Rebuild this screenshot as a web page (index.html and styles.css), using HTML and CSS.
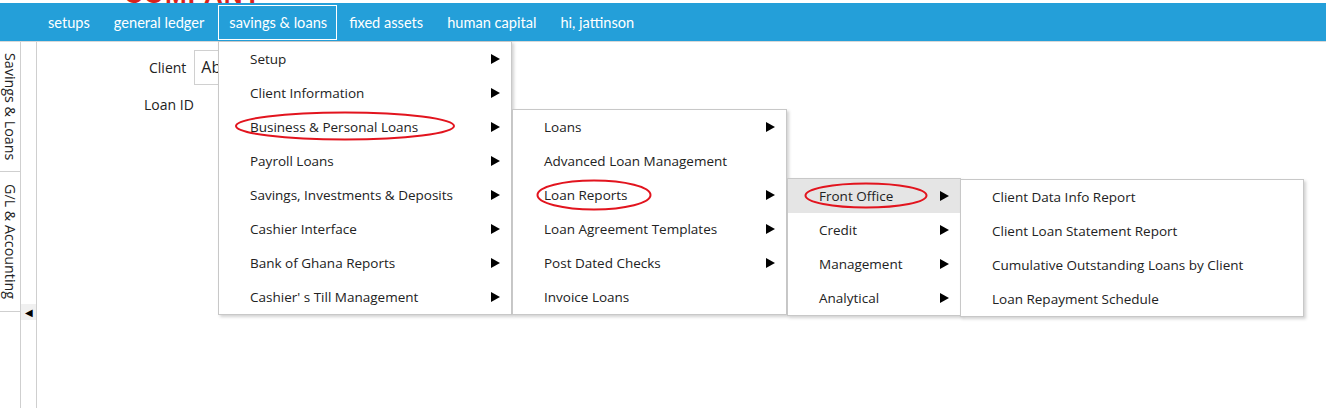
FILE: index.html
```html
<!DOCTYPE html>
<html>
<head>
<meta charset="utf-8">
<link rel="stylesheet" href="styles.css">
</head>
<body>
<div class="topstrip"><span class="brand">COMPANY</span></div>
<nav class="nav">
  <a class="nav-item">setups</a>
  <a class="nav-item">general ledger</a>
  <a class="nav-item active">savings &amp; loans</a>
  <a class="nav-item">fixed assets</a>
  <a class="nav-item">human capital</a>
  <a class="nav-item">hi, jattinson</a>
</nav>
<div class="main">
  <aside class="sidebar">
    <div class="tabs">
      <div class="tab tab-sl">Savings &amp; Loans</div>
      <div class="tab tab-gl">G/L &amp; Accounting</div>
    </div>
    <div class="collapse"><span class="collapse-btn">&#9664;</span></div>
  </aside>
  <section class="content">
    <div class="form-row row-client">
      <label class="lbl lbl-client">Client</label>
      <div class="input">Ab</div>
    </div>
    <div class="form-row row-loan">
      <label class="lbl lbl-loan">Loan ID</label>
    </div>
  </section>
</div>

<div class="menu menu1">
  <div class="mi"><span>Setup</span><i class="arr"></i></div>
  <div class="mi"><span>Client Information</span><i class="arr"></i></div>
  <div class="mi"><span>Business &amp; Personal Loans</span><i class="arr"></i></div>
  <div class="mi"><span>Payroll Loans</span><i class="arr"></i></div>
  <div class="mi"><span>Savings, Investments &amp; Deposits</span><i class="arr"></i></div>
  <div class="mi"><span>Cashier Interface</span><i class="arr"></i></div>
  <div class="mi"><span>Bank of Ghana Reports</span><i class="arr"></i></div>
  <div class="mi"><span>Cashier' s Till Management</span><i class="arr"></i></div>
</div>
<div class="menu menu2">
  <div class="mi"><span>Loans</span><i class="arr"></i></div>
  <div class="mi"><span>Advanced Loan Management</span></div>
  <div class="mi"><span>Loan Reports</span><i class="arr"></i></div>
  <div class="mi"><span>Loan Agreement Templates</span><i class="arr"></i></div>
  <div class="mi"><span>Post Dated Checks</span><i class="arr"></i></div>
  <div class="mi"><span>Invoice Loans</span></div>
</div>
<div class="menu menu3">
  <div class="mi hover"><span>Front Office</span><i class="arr"></i></div>
  <div class="mi"><span>Credit</span><i class="arr"></i></div>
  <div class="mi"><span>Management</span><i class="arr"></i></div>
  <div class="mi"><span>Analytical</span><i class="arr"></i></div>
</div>
<div class="menu menu4">
  <div class="mi"><span>Client Data Info Report</span></div>
  <div class="mi"><span>Client Loan Statement Report</span></div>
  <div class="mi"><span>Cumulative Outstanding Loans by Client</span></div>
  <div class="mi"><span>Loan Repayment Schedule</span></div>
</div>

<svg class="marks" width="1326" height="408" viewBox="0 0 1326 408">
  <ellipse cx="345" cy="126" rx="109" ry="13.5" />
  <ellipse cx="594" cy="195" rx="56.5" ry="14.5" />
  <ellipse cx="866" cy="195.5" rx="60.5" ry="12" />
</svg>
</body>
</html>
```

FILE: styles.css
```css
* { box-sizing: border-box; }
html, body { margin: 0; padding: 0; }
body {
  width: 1326px;
  height: 408px;
  overflow: hidden;
  background: #fff;
  font-family: "Open Sans", "Noto Sans", sans-serif;
  color: #222;
  position: relative;
}

.topstrip {
  height: 3px;
  overflow: hidden;
  padding-left: 124px;
}
.brand {
  display: block;
  font-family: "Liberation Sans", Arial, sans-serif;
  font-weight: bold;
  font-size: 26px;
  line-height: 26px;
  letter-spacing: 1px;
  color: #d9231d;
  margin-top: -19px;
}

.nav {
  height: 39px;
  background: #249fd9;
  border-bottom: 1px solid #d8d8d8;
  display: flex;
  align-items: center;
  padding-left: 36px;
}
.nav-item {
  font-family: "Lato", "Open Sans", sans-serif;
  font-size: 14.6px;
  color: #fff;
  padding: 0 11px;
  height: 35px;
  line-height: 33px;
  border: 1px solid transparent;
}
.nav-item.active {
  border-color: #fff;
  margin-left: 2px;
  padding: 0 9px 0 10px;
}

.main {
  display: flex;
  height: 366px;
}
.sidebar {
  display: flex;
  height: 100%;
}
.tabs {
  width: 21px;
  border-right: 1px solid #cfcfcf;
  display: flex;
  flex-direction: column;
}
.tab {
  writing-mode: vertical-rl;
  font-family: "Open Sans", "Noto Sans", sans-serif;
  font-size: 14.3px;
  color: #222;
  border-bottom: 1px solid #cfcfcf;
  line-height: 20px;
  text-align: center;
  white-space: nowrap;
  width: 20px;
  flex: none;
}
.tab-sl { height: 130px; }
.tab-gl { height: 140px; }
.collapse {
  width: 16px;
  border-right: 1px solid #cfcfcf;
  display: flex;
  flex-direction: column;
  padding-top: 262px;
}
.collapse-btn {
  display: block;
  height: 16px;
  background: #f0f0f0;
  font-size: 10px;
  line-height: 16px;
  text-align: center;
  color: #000;
}

.content {
  flex: 1;
  padding-top: 8px;
}
.form-row {
  display: flex;
  align-items: center;
}
.row-client { height: 35px; }
.row-loan { height: 38px; }
.lbl {
  font-size: 14px;
  color: #222;
}
.lbl-client { margin-left: 112px; }
.lbl-loan { margin-left: 107px; }
.input {
  margin-left: 8px;
  width: 200px;
  height: 35px;
  border: 1px solid #d0d0d0;
  font-size: 16px;
  line-height: 33px;
  padding-left: 6px;
}

.menu {
  position: absolute;
  background: #fff;
  border: 1px solid #c8c8c8;
  box-shadow: 2px 2px 3px rgba(0,0,0,0.18);
}
.menu1 { left: 218px; top: 41px; width: 294px; }
.menu2 { left: 512px; top: 109px; width: 275px; }
.menu3 { left: 787px; top: 178px; width: 174px; }
.menu4 { left: 960px; top: 179px; width: 344px; }

.mi {
  height: 34px;
  display: flex;
  align-items: center;
  padding-left: 31px;
  padding-right: 11px;
  padding-bottom: 1px;
  font-size: 13.5px;
  color: #222;
  white-space: nowrap;
}
.mi span { flex: 1; }
.mi.hover { background: #e5e5e5; }
.arr {
  width: 0;
  height: 0;
  border-top: 5px solid transparent;
  border-bottom: 5px solid transparent;
  border-left: 9px solid #000;
}

.marks {
  position: absolute;
  left: 0;
  top: 0;
  pointer-events: none;
}
.marks ellipse {
  fill: none;
  stroke: #e2141e;
  stroke-width: 2;
}
```
